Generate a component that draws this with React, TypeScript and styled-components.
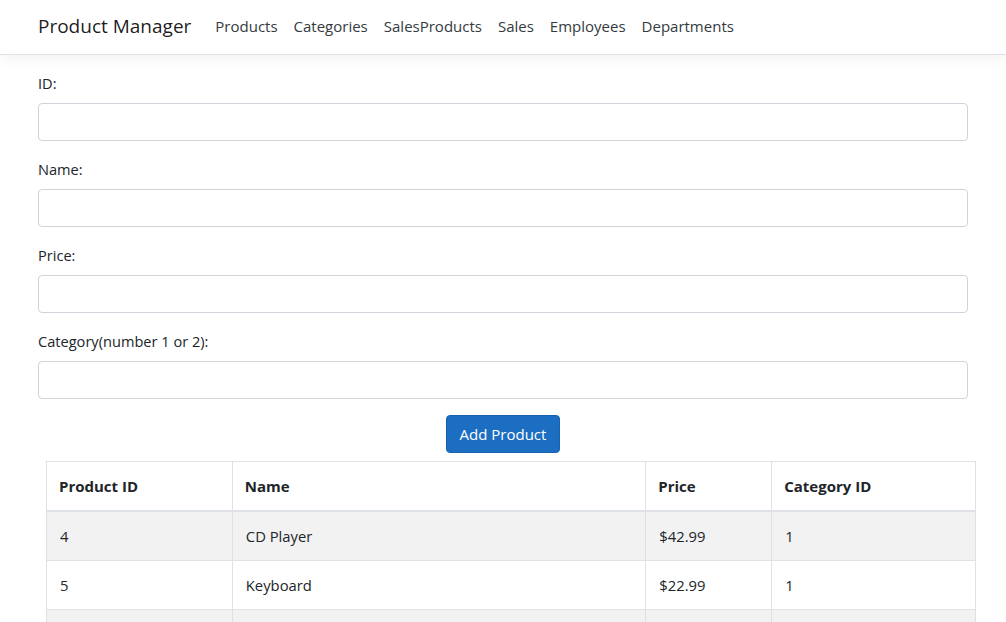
import * as React from 'react';
import styled, { createGlobalStyle } from 'styled-components';

type Product = {
    id: number;
    name: string;
    price: number;
    categoryId: number;
}

type RowProps = {
    striped: boolean;
}

const GlobalStyle = createGlobalStyle`
    html, body {
        margin: 0;
        padding: 0;
        background: #fff;
    }
    body {
        font-family: "Open Sans", "Noto Sans", sans-serif;
        font-size: 15px;
        line-height: 24px;
        color: #212529;
    }
    * {
        box-sizing: border-box;
    }
`;

const Navbar = styled.nav`
    height: 55px;
    background: #fff;
    border-bottom: 1px solid #dee2e6;
    box-shadow: 0 .25rem .75rem rgba(0, 0, 0, .05);
    margin-bottom: 16px;
`;

const Container = styled.div`
    width: 960px;
    margin: 0 auto;
    padding: 0 15px;
`;

const NavInner = styled(Container)`
    display: flex;
    align-items: center;
    height: 54px;
    padding-bottom: 2px;
`;

const Brand = styled.a`
    font-size: 19px;
    color: rgba(0, 0, 0, .9);
    margin-right: 16px;
    text-decoration: none;
    white-space: nowrap;
`;

const NavList = styled.ul`
    display: flex;
    list-style: none;
    margin: 0;
    padding: 0;
`;

const NavLink = styled.a`
    display: block;
    padding: 8px;
    color: #343a40;
    text-decoration: none;
    font-size: 15px;
`;

const FormGroup = styled.div`
    margin-bottom: 16px;
`;

const Label = styled.label`
    display: block;
    margin-bottom: 8px;
    font-size: 14.6px;
`;

const Input = styled.input`
    display: block;
    width: 100%;
    height: 38px;
    padding: 6px 12px;
    font-size: 16px;
    border: 1px solid #ced4da;
    border-radius: 4px;
    background: #fff;
`;

const ButtonRow = styled.div`
    display: flex;
    justify-content: center;
`;

const PrimaryButton = styled.button`
    height: 38px;
    padding: 0 12px;
    width: 114px;
    font-family: inherit;
    font-size: 15px;
    color: #fff;
    background: #1b6ec2;
    border: 1px solid #1861ac;
    border-radius: 4px;
`;

const Table = styled.table`
    width: 930px;
    margin: 8px 0 16px 8px;
    border-collapse: collapse;
    border: 1px solid #dee2e6;
`;

const Th = styled.th`
    text-align: left;
    font-weight: 700;
    font-size: 15px;
    padding: 12px 12px 11px;
    height: 49px;
    border: 1px solid #dee2e6;
    border-bottom-width: 2px;
`;

const Tr = styled.tr<RowProps>`
    background: ${({ striped }) => striped ? "#f2f2f2" : "#fff"};
`;

const Td = styled.td`
    padding: 12px 13px;
    height: 49px;
    font-size: 14.8px;
    border: 1px solid #dee2e6;
`;

const links = ["Products", "Categories", "SalesProducts", "Sales", "Employees", "Departments"];
const fields = ["ID:", "Name:", "Price:", "Category(number 1 or 2):"];

const products: Product[] = [
    { id: 4, name: "CD Player", price: 42.99, categoryId: 1 },
    { id: 5, name: "Keyboard", price: 22.99, categoryId: 1 },
    { id: 6, name: "Desk Lamp", price: 18.5, categoryId: 2 },
];

const App: React.FC = () => {
    return (
        <>
            <GlobalStyle />
            <Navbar>
                <NavInner>
                    <Brand href="#">Product Manager</Brand>
                    <NavList>
                        {links.map(l => <li key={l}><NavLink href="#">{l}</NavLink></li>)}
                    </NavList>
                </NavInner>
            </Navbar>
            <Container>
                {fields.map(f => (
                    <FormGroup key={f}>
                        <Label>{f}</Label>
                        <Input type="text" />
                    </FormGroup>
                ))}
                <ButtonRow>
                    <PrimaryButton>Add Product</PrimaryButton>
                </ButtonRow>
                <Table>
                    <colgroup>
                        <col style={{ width: 186 }} />
                        <col style={{ width: 414 }} />
                        <col style={{ width: 126 }} />
                        <col style={{ width: 204 }} />
                    </colgroup>
                    <thead>
                        <tr>
                            <Th>Product ID</Th>
                            <Th>Name</Th>
                            <Th>Price</Th>
                            <Th>Category ID</Th>
                        </tr>
                    </thead>
                    <tbody>
                        {products.map((p, i) => (
                            <Tr key={p.id} striped={i % 2 === 0}>
                                <Td>{p.id}</Td>
                                <Td>{p.name}</Td>
                                <Td>${p.price.toFixed(2)}</Td>
                                <Td>{p.categoryId}</Td>
                            </Tr>
                        ))}
                    </tbody>
                </Table>
            </Container>
        </>
    );
}

export default App;
